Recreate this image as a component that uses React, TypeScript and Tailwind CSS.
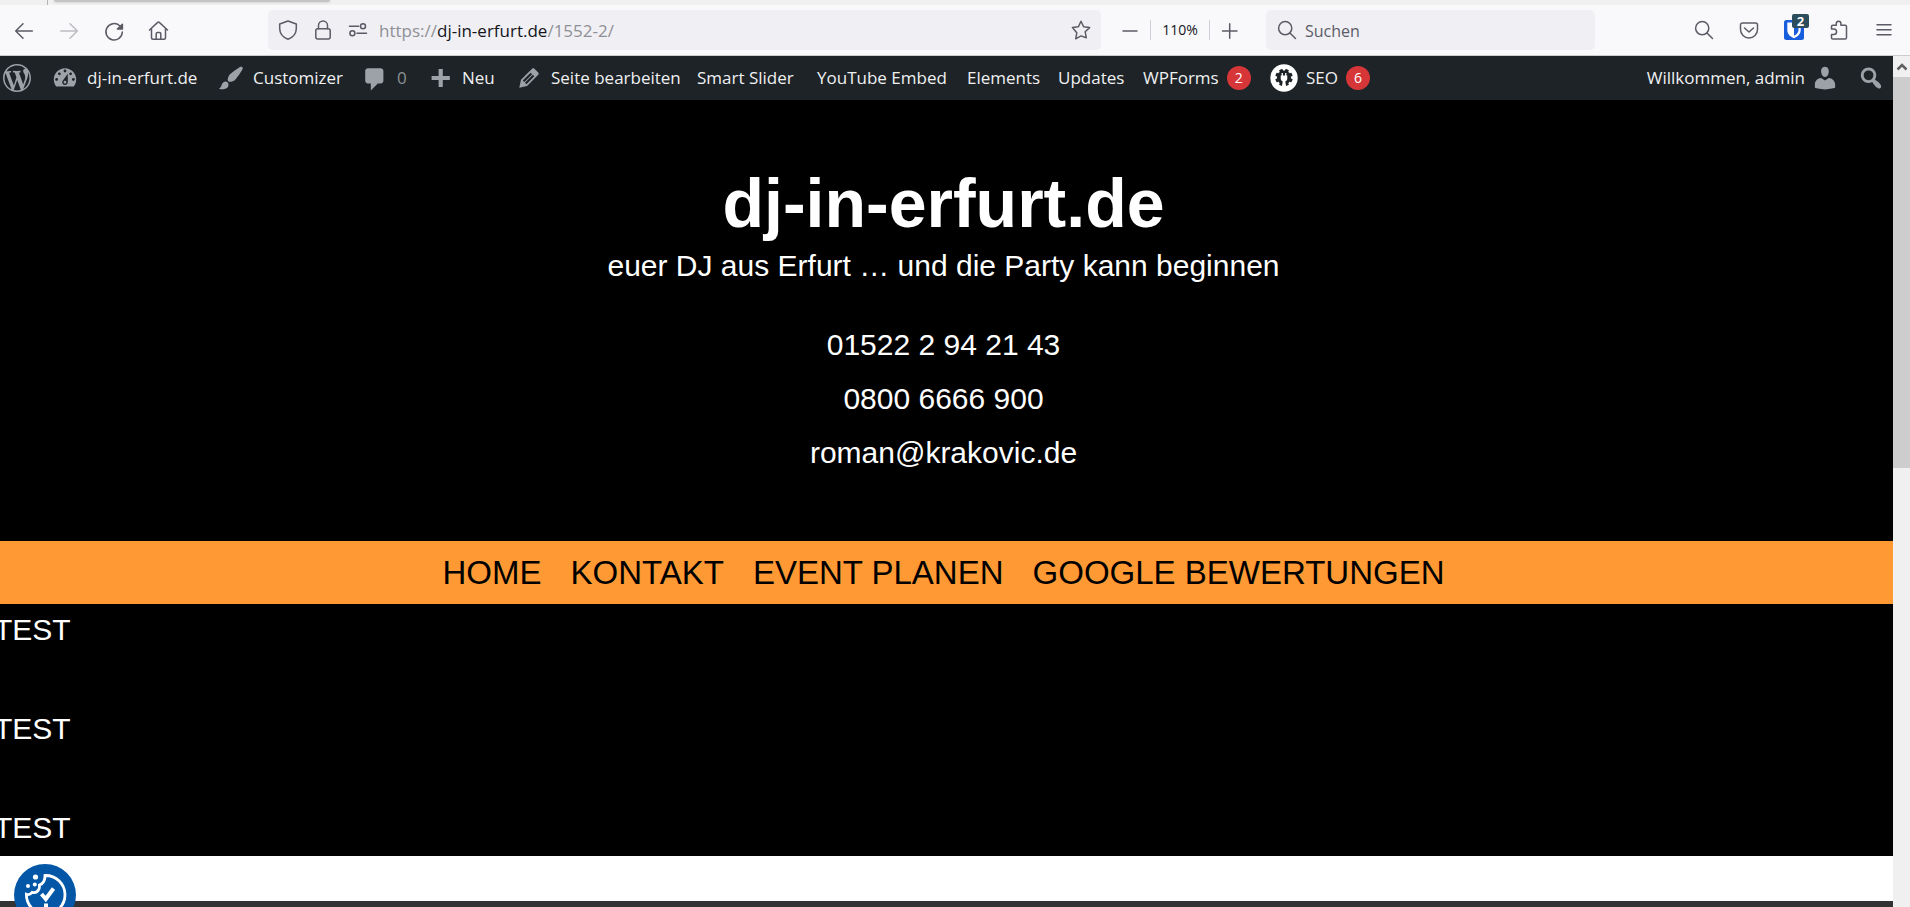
import type { ReactNode } from 'react'

const dashicons = {
  wordpress:
    'M20 10c0-5.51-4.49-10-10-10C4.48 0 0 4.49 0 10c0 5.52 4.48 10 10 10 5.51 0 10-4.48 10-10zM7.78 15.37L4.37 6.22c.55-.02 1.17-.08 1.17-.08.5-.06.44-1.13-.06-1.11 0 0-1.45.11-2.37.11-.18 0-.37 0-.58-.01C4.12 2.69 6.87 1.11 10 1.11c2.33 0 4.45.87 6.05 2.34-.68-.11-1.65.39-1.65 1.58 0 .74.45 1.36.9 2.1.35.61.55 1.36.55 2.46 0 1.49-1.4 5-1.4 5l-3.03-8.37c.54-.02.82-.17.82-.17.5-.05.44-1.25-.06-1.22 0 0-1.44.12-2.38.12-.87 0-2.33-.12-2.33-.12-.5-.03-.56 1.2-.06 1.22l.92.08 1.26 3.41zM17.41 10c.24-.64.74-1.87.43-4.25.7 1.29 1.05 2.71 1.05 4.25 0 3.29-1.73 6.24-4.4 7.78.97-2.59 1.94-5.2 2.92-7.78zM6.1 18.09C3.12 16.65 1.11 13.53 1.11 10c0-1.3.23-2.48.72-3.59C3.25 10.3 4.67 14.2 6.1 18.09zm4.03-6.63l2.58 6.98c-.86.29-1.76.45-2.71.45-.79 0-1.57-.11-2.29-.33.81-2.38 1.62-4.74 2.42-7.1z',
  dashboard:
    'M3.76 16h12.48c1.1-1.37 1.76-3.11 1.76-5 0-4.42-3.58-8-8-8s-8 3.58-8 8c0 1.89.66 3.63 1.76 5zM10 4c.55 0 1 .45 1 1s-.45 1-1 1-1-.45-1-1 .45-1 1-1zM6 6c.55 0 1 .45 1 1s-.45 1-1 1-1-.45-1-1 .45-1 1-1zm8 0c.55 0 1 .45 1 1s-.45 1-1 1-1-.45-1-1 .45-1 1-1zm-5.37 5.55L12 7v6c0 1.1-.9 2-2 2s-2-.9-2-2c0-.57.24-1.08.63-1.45zM4 10c.55 0 1 .45 1 1s-.45 1-1 1-1-.45-1-1 .45-1 1-1zm12 0c.55 0 1 .45 1 1s-.45 1-1 1-1-.45-1-1 .45-1 1-1zm-5 3c0-.55-.45-1-1-1s-1 .45-1 1 .45 1 1 1 1-.45 1-1z',
  brush:
    'M18.33 3.57s.27-.8-.31-1.36c-.53-.52-1.22-.24-1.22-.24-.61.3-5.76 3.47-7.67 5.57-.86.96-2.06 3.79-1.09 4.82.92.98 3.96-.17 4.79-1 2.06-2.06 5.21-7.17 5.5-7.79zM1.4 17.65c2.37-1.56 1.46-3.41 3.23-4.64.93-.65 2.22-.62 3.08.29.63.67.8 2.57-.16 3.46-1.57 1.45-4 1.55-6.15.89z',
  comment: 'M5 3h9c1.1 0 2 .9 2 2v7c0 1.1-.9 2-2 2h-2l-5 5v-5H5c-1.1 0-2-.9-2-2V5c0-1.1.9-2 2-2z',
  plus: 'M17 8.5v3h-5v5H9v-5H4v-3h5v-5h3v5h5z',
  edit: 'M13.89 3.39l2.71 2.72c.46.46.42 1.24.03 1.64l-8.01 8.02-5.56 1.16 1.16-5.58s7.6-7.63 7.99-8.03c.39-.39 1.22-.39 1.68.07zm-2.73 2.79l-5.59 5.61 1.11 1.11 5.54-5.65zm-2.97 8.23l5.58-5.6-1.07-1.08-5.59 5.6z',
  user: 'M10 9.25c-2.27 0-2.73-3.44-2.73-3.44C7 4.02 7.82 2 9.97 2c2.16 0 2.98 2.02 2.71 3.81 0 0-.41 3.44-2.68 3.44zm0 2.57L12.72 10c2.39 0 4.52 2.33 4.52 4.53v2.49s-3.65 1.13-7.24 1.13c-3.65 0-7.24-1.13-7.24-1.13v-2.49c0-2.25 1.94-4.48 4.47-4.48z',
  search:
    'M12.14 4.18c1.87 1.87 2.11 4.75.72 6.89.12.1.22.21.36.31.2.16.47.36.81.59.34.24.56.39.66.47.42.31.73.57.94.78.32.32.6.65.84 1 .25.35.44.69.59 1.04.14.35.21.68.18 1-.02.32-.14.59-.36.81s-.49.34-.81.36c-.31.02-.65-.04-.99-.19-.35-.14-.7-.34-1.04-.59-.35-.24-.68-.52-1-.84-.21-.21-.47-.52-.77-.93-.1-.13-.25-.35-.47-.66-.22-.32-.4-.57-.56-.78-.16-.2-.29-.35-.44-.5-2.07 1.09-4.69.76-6.44-.98-2.14-2.15-2.14-5.64 0-7.78 2.15-2.15 5.63-2.15 7.78 0zm-1.41 6.36c1.36-1.37 1.36-3.58 0-4.95-1.37-1.37-3.59-1.37-4.95 0-1.37 1.37-1.37 3.58 0 4.95 1.36 1.37 3.58 1.37 4.95 0z',
}

function Dashicon({ name }: { name: keyof typeof dashicons }) {
  return (
    <svg viewBox="0 0 20 20" className="w-7 h-7 shrink-0 fill-[#9ca2a7]" aria-hidden="true">
      <path d={dashicons[name]} />
    </svg>
  )
}

function Icon({ children }: { children: ReactNode }) {
  return (
    <svg
      viewBox="0 0 20 20"
      className="w-5 h-5 shrink-0 overflow-visible"
      fill="none"
      stroke="currentColor"
      strokeWidth="1.5"
      strokeLinecap="round"
      strokeLinejoin="round"
      aria-hidden="true"
    >
      {children}
    </svg>
  )
}

function SearchIcon() {
  return (
    <Icon>
      <circle cx="8.2" cy="8.2" r="6.6" />
      <path d="M13 13l5.5 5.5" />
    </Icon>
  )
}

function BrowserBar() {
  return (
    <div className="h-[51px] shrink-0 flex items-center pl-3.5 pr-4 bg-[#f9f9fb] border-b border-[#cccccc] text-[#5b5b66] font-['Open_Sans','Noto_Sans',sans-serif]">
      <div className="flex gap-[25px] shrink-0">
        <button aria-label="Zurück">
          <Icon>
            <path d="M1.7 11h16.6M9 3.7L1.7 11 9 18.3" />
          </Icon>
        </button>
        <button aria-label="Vor" className="text-[#bcbcc2]" disabled>
          <Icon>
            <path d="M18.3 11H1.7M11 3.7l7.3 7.3-7.3 7.3" />
          </Icon>
        </button>
        <button aria-label="Neu laden">
          <Icon>
            <path d="M18.3 12a8.2 8.2 0 1 1-2.6-6.2" />
            <path d="M18.4 4.2V9h-5z" fill="currentColor" />
          </Icon>
        </button>
        <button aria-label="Startseite">
          <Icon>
            <path d="M.5 10l8.2-7.6a1.2 1.2 0 0 1 1.6 0L18.5 10M2.5 8.500v9.200c0 .9.7 1.500 1.500 1.500h11c.9 0 1.500-.6 1.500-1.500V8.500M7.200 19v-5.200c0-.7.5-1.300 1.300-1.300h2c.8 0 1.300.6 1.300 1.300V19" />
          </Icon>
        </button>
      </div>

      <div className="ml-[99px] h-10 flex-1 min-w-0 flex items-center gap-[15px] px-2.5 rounded-[5px] bg-[#f0f0f4]">
        <Icon>
          <path d="M10 1l8.3 3v4.5c0 4.8-3 8.7-8.3 10.7C4.7 17.2 1.7 13.3 1.7 8.5V4z" />
        </Icon>
        <Icon>
          <rect x="2.8" y="8.8" width="14.4" height="10.2" rx="2" />
          <path d="M5.5 8.8V5.4a4.5 4.5 0 0 1 9 0v3.4" />
        </Icon>
        <Icon>
          <path d="M1.500 6.300h9.200M9 13.200h9.500" />
          <circle cx="15" cy="6.3" r="2.5" />
          <circle cx="4.4" cy="13.2" r="2.5" />
        </Icon>
        <div className="-ml-1 pt-0.5 flex-1 min-w-0 truncate text-[17px] text-[#8f8f96]">
          https://<span className="text-[#15141a]">dj-in-erfurt.de</span>/1552-2/
        </div>
        <button aria-label="Lesezeichen hinzufügen">
          <Icon>
            <path d="M10 1.3l2.6 5.5 6 .8-4.4 4.200 1.100 6L10 15.900l-5.300 2.900 1.100-6L1.400 7.600l6-.8z" />
          </Icon>
        </button>
      </div>

      <div className="ml-[19px] flex items-center gap-2.5 shrink-0">
        <button aria-label="Verkleinern">
          <Icon>
            <path d="M3 11h14" />
          </Icon>
        </button>
        <div className="h-5 w-[60px] flex items-center justify-center border-x border-[#cfcfd8] text-sm text-[#15141a]">
          110%
        </div>
        <button aria-label="Vergrößern">
          <Icon>
            <path d="M2.500 11h14.500M9.700 3.700v14.500" />
          </Icon>
        </button>
      </div>

      <label className="ml-[26px] w-[329px] h-10 shrink-0 flex items-center gap-2 px-[11px] rounded-[5px] bg-[#f0f0f4]">
        <SearchIcon />
        <input
          type="search"
          aria-label="Suchen"
          placeholder="Suchen"
          className="w-full pt-0.5 bg-transparent text-base outline-none placeholder:text-[#5b5b66]"
        />
      </label>

      <div className="ml-[99px] flex gap-[25px] shrink-0">
        <button aria-label="Auf der Seite suchen">
          <SearchIcon />
        </button>
        <button aria-label="Pocket">
          <Icon>
            <path d="M3.500 3h13a2 2 0 0 1 2 2v4.500a8.500 8.500 0 0 1-17 0V5a2 2 0 0 1 2-2z" />
            <path d="M5.500 8l4.500 4 4.500-4" />
          </Icon>
        </button>
        <button aria-label="Bitwarden" className="relative">
          <svg viewBox="0 0 20 20" className="w-5 h-5" aria-hidden="true">
            <rect width="20" height="20" rx="2.5" fill="#175ddc" />
            <path
              d="M3.300 2.500h13.400v7.500c0 3.800-2.700 6.500-6.700 8.300-4-1.800-6.700-4.500-6.700-8.300zM10 4.700v11c2.700-1.300 4.500-3 4.500-5.700V4.700z"
              fill="#fff"
              fillRule="evenodd"
            />
          </svg>
          <span className="absolute -top-1.5 left-2 w-[17px] h-3.5 rounded-[2px] bg-[#2b4d5c] text-white text-[13px] leading-[14px] font-bold">
            2
          </span>
        </button>
        <button aria-label="Erweiterungen">
          <Icon>
            <path d="M2.500 9V6.500c0-.8.6-1.300 1.300-1.300h3.500V3.500a2.300 2.300 0 0 1 4.600 0v1.700h4.300c.8 0 1.300.5 1.300 1.300v11.200c0 .8-.5 1.300-1.300 1.300H3.800c-.7 0-1.300-.5-1.300-1.300v-3.200h2.300a2.700 2.700 0 0 0 0-5.500z" />
          </Icon>
        </button>
        <button aria-label="Menü">
          <Icon>
            <path d="M3 4.700h14M3 9.700h14M3 14.700h14" />
          </Icon>
        </button>
      </div>
    </div>
  )
}

function Badge({ children }: { children: ReactNode }) {
  return (
    <span className="w-6 h-6 shrink-0 rounded-full bg-[#d63638] text-white text-sm leading-6 text-center">
      {children}
    </span>
  )
}

const teeth = [0, 45, 90, 135, 180, 225, 270, 315]

function SeoIcon() {
  return (
    <svg viewBox="0 0 28 28" className="w-7 h-7 shrink-0" aria-hidden="true">
      <circle cx="14" cy="14" r="13.7" fill="#fff" />
      <g fill="#1d2327">
        <circle cx="14" cy="13.5" r="7" />
        {teeth.map((angle) => (
          <rect key={angle} x="12.2" y="4.8" width="3.6" height="3.5" rx=".5" transform={`rotate(${angle + 22.5} 14 13.5)`} />
        ))}
      </g>
      <path
        d="M11.6 9v2.600h-.9v2.600c0 1.700.8 2.700 2 3.200l-.9 5.600h4.400l-.9-5.600c1.200-.5 2-1.500 2-3.200v-2.600h-.9V9h-1.300v2.600h-2.200V9z"
        fill="#fff"
      />
    </svg>
  )
}

function AdminBar() {
  const item = 'flex items-center gap-2 shrink-0 whitespace-nowrap'
  return (
    <nav className="h-11 flex items-center pl-[3px] pr-2 bg-[#1d2327] text-[#f0f0f1] text-[17px] leading-6 font-['Open_Sans','Noto_Sans',sans-serif]">
      <a href="#" className={`${item} w-12`} aria-label="WordPress">
        <Dashicon name="wordpress" />
      </a>
      <a href="#" className={`${item} w-[166px]`}>
        <Dashicon name="dashboard" />
        dj-in-erfurt.de
      </a>
      <a href="#" className={`${item} w-36`}>
        <Dashicon name="brush" />
        Customizer
      </a>
      <a href="#" className={`${item} w-[65px]`}>
        <Dashicon name="comment" />
        <span className="text-[#8c9195]">0</span>
      </a>
      <a href="#" className={`${item} w-[89px]`}>
        <Dashicon name="plus" />
        Neu
      </a>
      <a href="#" className={`${item} w-[182px]`}>
        <Dashicon name="edit" />
        Seite bearbeiten
      </a>
      <a href="#" className={`${item} w-[120px]`}>
        Smart Slider
      </a>
      <a href="#" className={`${item} w-[150px]`}>
        YouTube Embed
      </a>
      <a href="#" className={`${item} w-[91px]`}>
        Elements
      </a>
      <a href="#" className={`${item} w-[85px]`}>
        Updates
      </a>
      <a href="#" className={`${item} w-[127px]`}>
        WPForms
        <Badge>2</Badge>
      </a>
      <a href="#" className={item}>
        <SeoIcon />
        SEO
        <Badge>6</Badge>
      </a>
      <a href="#" className="ml-auto flex items-center gap-1.5 shrink-0 whitespace-nowrap">
        Willkommen, admin
        <Dashicon name="user" />
      </a>
      <button aria-label="Suche" className="ml-[18px] shrink-0">
        <Dashicon name="search" />
      </button>
    </nav>
  )
}

function CookieButton() {
  return (
    <button
      aria-label="Cookie-Einstellungen"
      className="fixed left-3.5 -bottom-[19px] w-[62px] h-[62px] rounded-full bg-[#0457a7]"
    >
      <svg viewBox="0 0 62 62" fill="none" stroke="#fff" strokeWidth="2.8" aria-hidden="true">
        <path d="M31 11.500a19.300 19.300 0 1 1-18.600 18.800c2 .8 4.200.2 5.800-2 2.500.7 5.300-.3 6.600-3 1-2 .7-3 .6-4.200 3.800-1.500 5.800-4.600 5.600-9.600z" />
        <path d="M27.500 30l4.300 5 7.700-10.500" strokeWidth="4" />
        <path d="M32 39.500v8" strokeWidth="4" />
        <g fill="#fff" stroke="none">
          <circle cx="21.5" cy="13" r="2.6" />
          <circle cx="14" cy="22" r="2" />
          <circle cx="20.8" cy="20.5" r="2" />
        </g>
      </svg>
    </button>
  )
}

const navLinks = ['HOME', 'KONTAKT', 'EVENT PLANEN', 'GOOGLE BEWERTUNGEN']

export default function App() {
  return (
    <div className="h-screen flex flex-col overflow-hidden bg-white">
      <div className="h-[5px] shrink-0 flex bg-[#f0f0f0]">
        <div className="w-12 border-r border-[#b4b4b4]" />
        <div className="ml-1.5 w-[276px] h-0.5 rounded-b-sm bg-[#c4c4c4] shadow-[0_0_3px_#bbbbbb]" />
      </div>
      <BrowserBar />

      <div className="flex-1 min-h-0 flex">
        <div className="flex-1 min-w-0 flex flex-col overflow-hidden font-['Liberation_Sans',Arial,sans-serif]">
          <AdminBar />

          <header className="pt-[65px] pb-[61px] pr-1.5 bg-black text-white text-center text-[30px]">
            <h1 className="text-[68px] leading-[76px] font-bold">dj-in-erfurt.de</h1>
            <p className="leading-[50px]">euer DJ aus Erfurt … und die Party kann beginnen</p>
            <div className="mt-[27px] flex flex-col items-center leading-[54px]">
              <a href="tel:015222942143">01522 2 94 21 43</a>
              <a href="tel:08006666900">0800 6666 900</a>
              <a href="mailto:roman@krakovic.de">roman@krakovic.de</a>
            </div>
          </header>

          <nav className="h-[63px] shrink-0 flex items-center justify-center gap-[29px] pr-1.5 bg-[#ff9933] text-black text-[33px] whitespace-nowrap">
            {navLinks.map((label) => (
              <a key={label} href="#">
                {label}
              </a>
            ))}
          </nav>

          <main className="-ml-1.5 pt-px pb-[3px] flex flex-col gap-[49px] bg-black text-white text-[30px] leading-[50px]">
            <p>TEST</p>
            <p>TEST</p>
            <p>TEST</p>
          </main>

          <div className="h-[45px] shrink-0 bg-white" />
          <footer className="flex-1 bg-[#333333]" />
        </div>

        <div className="w-[17px] shrink-0 flex flex-col bg-[#f0f0f0]">
          <button aria-label="Nach oben" className="h-[21px] shrink-0 flex items-center justify-center">
            <svg viewBox="0 0 12 8" className="w-3 h-2" fill="none" stroke="#606060" strokeWidth="2.5" aria-hidden="true">
              <path d="M1.5 6.5L6 2l4.5 4.5" />
            </svg>
          </button>
          <div className="h-[46%] bg-[#cdcdcd]" />
        </div>
      </div>

      <CookieButton />
    </div>
  )
}
